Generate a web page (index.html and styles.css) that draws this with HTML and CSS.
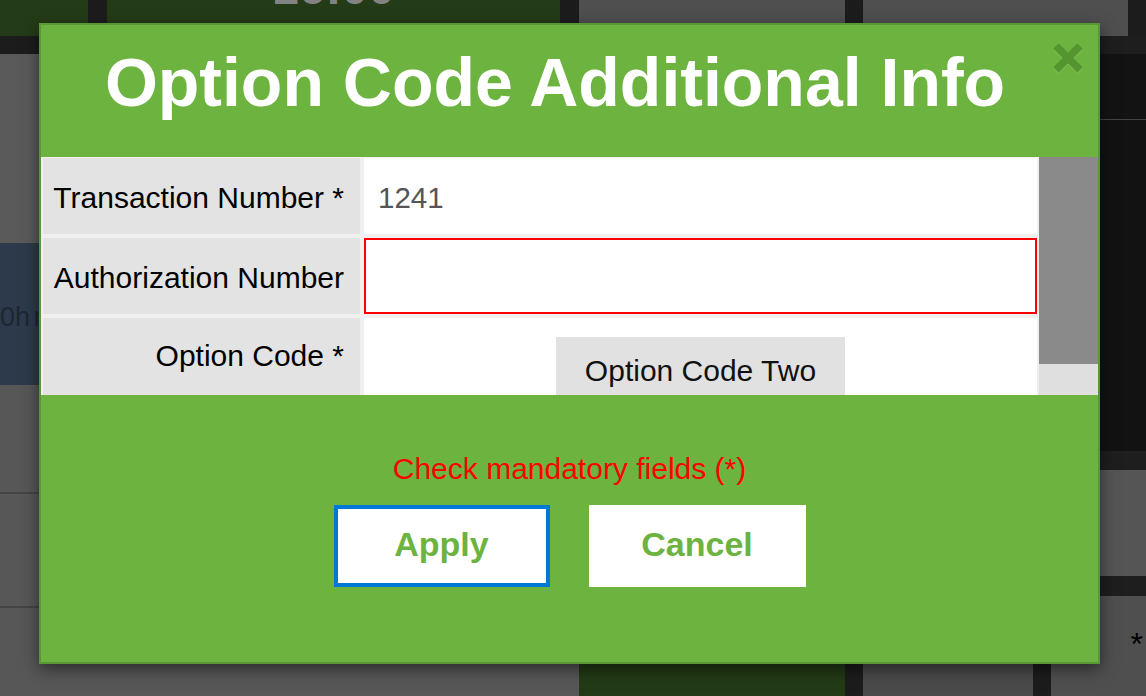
FILE: index.html
```html
<!DOCTYPE html>
<html lang="en">
<head>
<meta charset="utf-8">
<title>Option Code Additional Info</title>
<link rel="stylesheet" href="styles.css">
</head>
<body>
<div class="app">
  <div class="blk dgreen b-tl"></div>
  <div class="blk dgreen b-tm"><span class="clock">16:00</span></div>
  <div class="blk gray b-tg1"></div>
  <div class="blk gray b-tg2"></div>
  <div class="blk lgray b-l1"></div>
  <div class="blk blue b-l2"><span class="dur">0h m</span></div>
  <div class="blk lgray b-l3"></div>
  <div class="blk line b-l4"></div>
  <div class="blk lgray b-l5"></div>
  <div class="blk line b-l6"></div>
  <div class="blk lgray b-l7"></div>
  <div class="blk dgreen b-bg"></div>
  <div class="blk mgray b-bg2"></div>
  <div class="blk dark1 b-r1"></div>
  <div class="blk dark2 b-r2"></div>
  <div class="blk line b-r3"></div>
  <div class="blk dark2 b-r4"></div>
  <div class="blk dark1 b-r5"></div>
  <div class="blk lgray b-r6"></div>
  <div class="blk dark1 b-r7"></div>
  <div class="blk gray b-r8"><span class="star">*</span></div>
</div>

<div class="modal">
  <div class="modal-header">
    <h1 class="modal-title">Option Code Additional Info</h1>
    <button class="close" type="button" aria-label="Close">
      <svg width="30" height="31" viewBox="0 0 30 31">
        <g stroke="#86c35f" stroke-width="7.5" fill="none">
          <line x1="3" y1="4" x2="27" y2="28"/>
          <line x1="27" y1="4" x2="3" y2="28"/>
        </g>
        <g stroke="#55952f" stroke-width="7.5" fill="none">
          <line x1="3" y1="3" x2="27" y2="27"/>
          <line x1="27" y1="3" x2="3" y2="27"/>
        </g>
      </svg>
    </button>
  </div>
  <div class="modal-body">
    <div class="form-viewport">
      <div class="form-grid">
        <div class="label">Transaction Number *</div>
        <div class="value value-text">1241</div>
        <div class="label">Authorization Number</div>
        <div class="value"><input class="field invalid" type="text"></div>
        <div class="label label-tall">Option Code *</div>
        <div class="value value-options"><button class="opt-btn" type="button">Option Code Two</button></div>
      </div>
    </div>
    <div class="scrollbar"><div class="thumb"></div></div>
  </div>
  <div class="modal-footer">
    <div class="message">Check mandatory fields (*)</div>
    <div class="actions">
      <button class="action apply" type="button">Apply</button>
      <button class="action cancel" type="button">Cancel</button>
    </div>
  </div>
</div>
</body>
</html>
```

FILE: styles.css
```css
* { box-sizing: border-box; }

html, body {
  margin: 0;
  padding: 0;
}

body {
  width: 1146px;
  height: 696px;
  overflow: hidden;
  position: relative;
  background: #1c1c1c;
  font-family: "Liberation Sans", Arial, sans-serif;
}

/* ---------- dimmed application behind the dialog ---------- */
.app {
  display: grid;
  width: 1146px;
  height: 696px;
  grid-template-columns: 40px 48px 19px 453px 19px 266px 18px 170px 18px 49px 28px 18px;
  grid-template-rows: 24px 12px 18px 65px 1px 123px 142px 66px 19px 22px 2px 82px 20px 10px 2px 56px 32px;
  background: #1c1c1c;
}

.blk { overflow: hidden; }
.dgreen { background: #243b17; }
.gray { background: #4f4f4f; }
.lgray { background: #575757; }
.mgray { background: #4a4a4a; }
.blue { background: #2c3a4b; }
.line { background: #444444; }
.dark1 { background: #1e1e1e; }
.dark2 { background: #131313; }

.b-tl { grid-column: 1 / 3; grid-row: 1 / 3; }
.b-tm { grid-column: 4 / 5; grid-row: 1 / 3; text-align: center; }
.b-tg1 { grid-column: 6 / 7; grid-row: 1 / 3; }
.b-tg2 { grid-column: 8 / 12; grid-row: 1 / 3; }
.b-l1 { grid-column: 1 / 2; grid-row: 4 / 7; background: #5a5a5a; }
.b-l2 { grid-column: 1 / 2; grid-row: 7 / 8; }
.b-l3 { grid-column: 1 / 5; grid-row: 8 / 11; }
.b-l4 { grid-column: 1 / 5; grid-row: 11 / 12; }
.b-l5 { grid-column: 1 / 5; grid-row: 12 / 15; }
.b-l6 { grid-column: 1 / 5; grid-row: 15 / 16; }
.b-l7 { grid-column: 1 / 6; grid-row: 16 / 18; }
.b-bg { grid-column: 6 / 7; grid-row: 13 / 18; background: #233a16; }
.b-bg2 { grid-column: 8 / 9; grid-row: 13 / 18; }
.b-r1 { grid-column: 11 / 13; grid-row: 3 / 4; }
.b-r2 { grid-column: 11 / 13; grid-row: 4 / 5; }
.b-r3 { grid-column: 11 / 13; grid-row: 5 / 6; }
.b-r4 { grid-column: 11 / 13; grid-row: 6 / 9; background: #121212; }
.b-r5 { grid-column: 11 / 13; grid-row: 9 / 10; }
.b-r6 { grid-column: 11 / 13; grid-row: 10 / 13; background: #555555; }
.b-r7 { grid-column: 11 / 13; grid-row: 13 / 14; }
.b-r8 { grid-column: 10 / 13; grid-row: 14 / 18; background: #4f4f4f; text-align: right; }

.clock {
  display: block;
  margin-top: -36px;
  font-size: 48px;
  line-height: 48px;
  font-weight: bold;
  color: #838383;
}

.dur {
  display: block;
  margin-top: 58px;
  font-size: 27px;
  line-height: 32px;
  word-spacing: -4px;
  color: #1e2632;
  white-space: nowrap;
}

.star {
  display: inline-block;
  margin-top: 30px;
  margin-right: 3px;
  font-size: 32px;
  line-height: 36px;
  color: #000;
}

/* ---------- dialog ---------- */
.modal {
  position: absolute;
  left: 39px;
  top: 23px;
  width: 1061px;
  height: 641px;
  border: 2px solid #5a9835;
  background: #6cb33f;
  box-shadow: 0 5px 15px rgba(0, 0, 0, 0.5);
  display: flex;
  flex-direction: column;
}

.modal-header {
  flex: none;
  height: 132px;
  padding: 18px 29px 0 0;
}

.modal-title {
  margin: 0;
  font-size: 68px;
  line-height: 78px;
  font-weight: bold;
  color: #ffffff;
  text-align: center;
  white-space: nowrap;
}

.close {
  position: absolute;
  top: 18px;
  right: 15px;
  width: 30px;
  height: 31px;
  padding: 0;
  border: 0;
  background: transparent;
  display: block;
}
.close svg { display: block; }

.modal-body {
  flex: none;
  height: 238px;
  display: flex;
  background: #f0f0f0;
  overflow: hidden;
}

.form-viewport {
  flex: 1;
  overflow: hidden;
}

.scrollbar {
  flex: none;
  width: 59px;
  background: #dfdfdf;
}

.thumb {
  height: 207px;
  background: #8a8a8a;
}

.form-grid {
  display: grid;
  grid-template-columns: 317px 673px;
  grid-template-rows: 76px 76px auto;
  gap: 4px;
  padding: 1px 2px 2px 2px;
}

.label {
  background: #e3e3e3;
  text-align: right;
  padding: 23px 16px 0 0;
  font-size: 30px;
  color: #000;
  white-space: nowrap;
}
.label-tall { padding-top: 21px; }

.value { background: #ffffff; }

.value-text {
  padding: 23px 0 0 14px;
  font-size: 29.5px;
  color: #555555;
}

.field {
  display: block;
  width: 100%;
  height: 76px;
  margin: 0;
  border: 2px solid #ff0000;
  background: #ffffff;
  font: inherit;
  outline: none;
}

.value-options {
  display: flex;
  justify-content: center;
  align-items: flex-start;
  padding: 19px 0 23px 0;
}

.opt-btn {
  height: 69px;
  margin: 0;
  border: 0;
  background: #e1e1e1;
  padding: 17px 29px 18px;
  font-family: "Liberation Sans", Arial, sans-serif;
  font-size: 30px;
  line-height: 34px;
  color: #111;
  white-space: nowrap;
}

.modal-footer {
  flex: 1;
  padding-top: 57px;
}

.message {
  font-size: 30px;
  line-height: 34px;
  color: #ff0000;
  text-align: center;
}

.actions {
  display: flex;
  justify-content: center;
  gap: 39px;
  margin-top: 19px;
}

.action {
  width: 216px;
  height: 82px;
  margin: 0;
  padding: 0 0 3px 0;
  border: 4px solid #ffffff;
  background: #ffffff;
  font-family: "Liberation Sans", Arial, sans-serif;
  font-size: 34px;
  font-weight: bold;
  color: #6cb33f;
}
.apply { border-color: #0078d7; }
.cancel { width: 217px; }
```
